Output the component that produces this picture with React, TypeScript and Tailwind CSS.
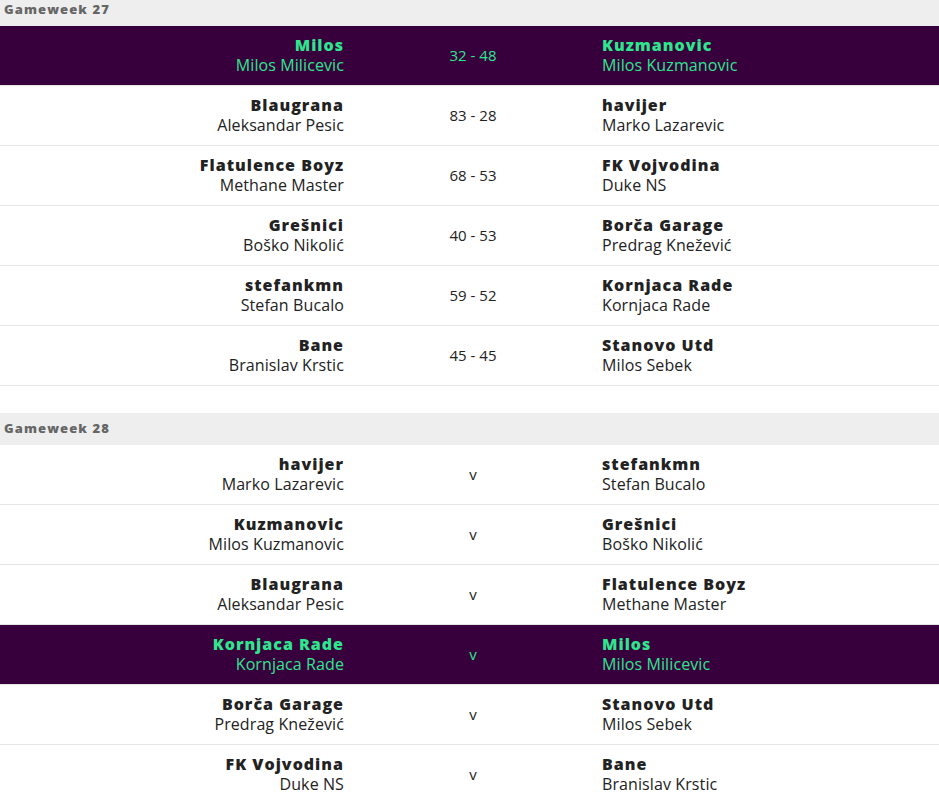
import React from 'react';

type Match = {
  home: string;
  homeManager: string;
  away: string;
  awayManager: string;
  score?: string;
  mine?: boolean;
};

const gameweeks: { title: string; matches: Match[] }[] = [
  {
    title: 'Gameweek 27',
    matches: [
      { home: 'Milos', homeManager: 'Milos Milicevic', away: 'Kuzmanovic', awayManager: 'Milos Kuzmanovic', score: '32 - 48', mine: true },
      { home: 'Blaugrana', homeManager: 'Aleksandar Pesic', away: 'havijer', awayManager: 'Marko Lazarevic', score: '83 - 28' },
      { home: 'Flatulence Boyz', homeManager: 'Methane Master', away: 'FK Vojvodina', awayManager: 'Duke NS', score: '68 - 53' },
      { home: 'Grešnici', homeManager: 'Boško Nikolić', away: 'Borča Garage', awayManager: 'Predrag Knežević', score: '40 - 53' },
      { home: 'stefankmn', homeManager: 'Stefan Bucalo', away: 'Kornjaca Rade', awayManager: 'Kornjaca Rade', score: '59 - 52' },
      { home: 'Bane', homeManager: 'Branislav Krstic', away: 'Stanovo Utd', awayManager: 'Milos Sebek', score: '45 - 45' },
    ],
  },
  {
    title: 'Gameweek 28',
    matches: [
      { home: 'havijer', homeManager: 'Marko Lazarevic', away: 'stefankmn', awayManager: 'Stefan Bucalo' },
      { home: 'Kuzmanovic', homeManager: 'Milos Kuzmanovic', away: 'Grešnici', awayManager: 'Boško Nikolić' },
      { home: 'Blaugrana', homeManager: 'Aleksandar Pesic', away: 'Flatulence Boyz', awayManager: 'Methane Master' },
      { home: 'Kornjaca Rade', homeManager: 'Kornjaca Rade', away: 'Milos', awayManager: 'Milos Milicevic', mine: true },
      { home: 'Borča Garage', homeManager: 'Predrag Knežević', away: 'Stanovo Utd', awayManager: 'Milos Sebek' },
      { home: 'FK Vojvodina', homeManager: 'Duke NS', away: 'Bane', awayManager: 'Branislav Krstic' },
    ],
  },
];

const MatchRow = ({ m }: { m: Match }) => {
  const text = m.mine ? 'text-[#2ee68c]' : 'text-[#222222]';
  return (
    <div
      className={`flex items-center h-[60px] border-b border-[#e6e6e6] ${
        m.mine ? 'bg-[#37003c]' : 'bg-white'
      } ${text}`}
    >
      <div className="w-[344px] text-right">
        <div className="text-[16px] leading-[20px] font-extrabold tracking-[1px]">{m.home}</div>
        <div className="text-[16px] leading-[21px] tracking-[0.1px]">{m.homeManager}</div>
      </div>
      <div className="w-[258px] text-center text-[15px]">{m.score ?? 'v'}</div>
      <div className="flex-1">
        <div className="text-[16px] leading-[20px] font-extrabold tracking-[1px]">{m.away}</div>
        <div className="text-[16px] leading-[21px] tracking-[0.1px]">{m.awayManager}</div>
      </div>
    </div>
  );
};

export default function App() {
  return (
    <div className="w-[939px] h-[800px] overflow-hidden bg-white font-['Open_Sans',sans-serif]">
      <div className="-mt-[6px]">
        {gameweeks.map((gw) => (
          <div key={gw.title} className="mb-[27px]">
            <div className="h-[32px] bg-[#eeeeee] flex items-center px-[4px] text-[13px] font-extrabold tracking-[1.1px] text-[#666666]">
              {gw.title}
            </div>
            {gw.matches.map((m, i) => (
              <MatchRow key={i} m={m} />
            ))}
          </div>
        ))}
      </div>
    </div>
  );
}
